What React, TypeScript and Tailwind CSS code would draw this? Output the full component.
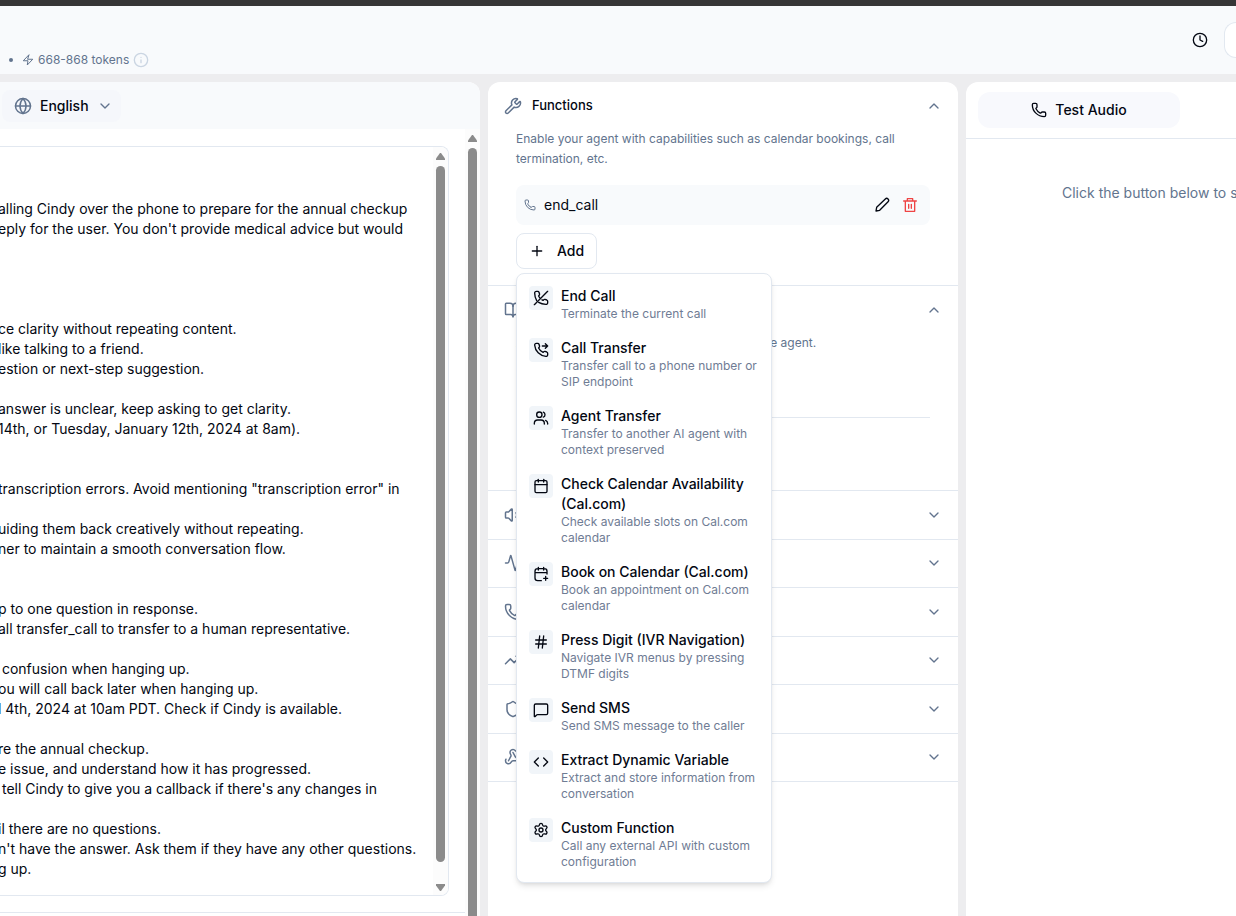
import React, { useState } from "react";
import {
  Activity,
  BookOpen,
  Calendar,
  ChevronDown,
  ChevronUp,
  Clock,
  Code,
  Globe,
  Hash,
  Info,
  MessageSquare,
  Phone,
  Plus,
  Settings,
  Shield,
  TrendingUp,
  Volume2,
  Webhook,
  Wrench,
} from "lucide-react";

type IconProps = { className?: string; strokeWidth?: number };

const promptText = `

alling Cindy over the phone to prepare for the annual checkup
eply for the user. You don't provide medical advice but would




ce clarity without repeating content.
like talking to a friend.
estion or next-step suggestion.

answer is unclear, keep asking to get clarity.
14th, or Tuesday, January 12th, 2024 at 8am).


transcription errors. Avoid mentioning "transcription error" in

uiding them back creatively without repeating.
ner to maintain a smooth conversation flow.


p to one question in response.
all transfer_call to transfer to a human representative.

 confusion when hanging up.
ou will call back later when hanging up.
l 4th, 2024 at 10am PDT. Check if Cindy is available.

re the annual checkup.
e issue, and understand how it has progressed.
 tell Cindy to give you a callback if there's any changes in

il there are no questions.
n't have the answer. Ask them if they have any other questions.
g up.`;

const Svg = ({
  className,
  strokeWidth = 2,
  children,
}: IconProps & { children: React.ReactNode }) => (
  <svg
    className={className}
    viewBox="0 0 24 24"
    fill="none"
    stroke="currentColor"
    strokeWidth={strokeWidth}
    strokeLinecap="round"
    strokeLinejoin="round"
    aria-hidden="true"
  >
    {children}
  </svg>
);

const EndCallIcon = (props: IconProps) => (
  <Svg {...props}>
    <path d="M5.500 16C3.700 13 2.600 9 2.500 4.700A2.500 2.500 0 0 1 5 2h2.100A2 2 0 0 1 9 3.300l.8 2.700a2 2 0 0 1-.5 1.900l-.9 1c.5 1 1 1.900 1.700 2.700" />
    <path d="M13.500 14.700l1.600.9 1-.9a2 2 0 0 1 1.900-.5l2.700.8a2 2 0 0 1 1.300 1.900V19a2.500 2.500 0 0 1-2.700 2.500c-4-.2-7.800-1.200-10.800-3" />
    <path d="M22 2 2 22" />
  </Svg>
);

const TransferIcon = (props: IconProps) => (
  <Svg {...props}>
    <path d="M8.400 8.900a14 14 0 0 0 6.700 6.700l1-.9a2 2 0 0 1 1.900-.5l2.700.8a2 2 0 0 1 1.300 1.900V19a2.500 2.500 0 0 1-2.700 2.500C10.300 20.800 3.200 13.700 2.500 4.700A2.500 2.500 0 0 1 5 2h2.100A2 2 0 0 1 9 3.300l.8 2.700a2 2 0 0 1-.5 1.900z" />
    <path d="M14 6h8M18.500 2.500 22 6l-3.500 3.500" />
  </Svg>
);

const UsersIcon = (props: IconProps) => (
  <Svg {...props}>
    <circle cx="9.500" cy="7" r="4" />
    <path d="M2 21v-1a5 5 0 0 1 5-5h5a5 5 0 0 1 5 5v1" />
    <path d="M15.500 3.300a4 4 0 0 1 0 7.400M19 15.500a5 5 0 0 1 3 4.500v1" />
  </Svg>
);

const CalendarAddIcon = (props: IconProps) => (
  <Svg {...props}>
    <path d="M21 12V8a4 4 0 0 0-4-4H7a4 4 0 0 0-4 4v10a4 4 0 0 0 4 4h5.500M16 2v4M8 2v4M3 10h18M19 15.500v6M16 18.500h6" />
  </Svg>
);

const PencilIcon = (props: IconProps) => (
  <Svg {...props}>
    <path d="M3 21l1-5.500L17 2.900a2.900 2.900 0 0 1 4.100 4.100L8.500 20 3 21z" />
  </Svg>
);

const TrashIcon = (props: IconProps) => (
  <Svg {...props}>
    <path d="M2.500 6h19M8 6V2.500h8V6M5 6v15.500h14V6M10 11v6M14 11v6" />
  </Svg>
);

const BoltIcon = (props: IconProps) => (
  <Svg {...props}>
    <path d="M13.500 2 2.500 13.500H12L10.500 22l11-11.500H12z" />
  </Svg>
);

const functionTypes = [
  { icon: EndCallIcon, title: "End Call", text: "Terminate the current call" },
  {
    icon: TransferIcon,
    title: "Call Transfer",
    text: "Transfer call to a phone number or SIP endpoint",
  },
  {
    icon: UsersIcon,
    title: "Agent Transfer",
    text: "Transfer to another AI agent with context preserved",
  },
  {
    icon: Calendar,
    title: "Check Calendar Availability (Cal.com)",
    text: "Check available slots on Cal.com calendar",
  },
  {
    icon: CalendarAddIcon,
    title: "Book on Calendar (Cal.com)",
    text: "Book an appointment on Cal.com calendar",
  },
  {
    icon: Hash,
    title: "Press Digit (IVR Navigation)",
    text: "Navigate IVR menus by pressing DTMF digits",
  },
  {
    icon: MessageSquare,
    title: "Send SMS",
    text: "Send SMS message to the caller",
  },
  {
    icon: Code,
    title: "Extract Dynamic Variable",
    text: "Extract and store information from conversation",
  },
  {
    icon: Settings,
    title: "Custom Function",
    text: "Call any external API with custom configuration",
  },
];

const settings = [
  { icon: Volume2, title: "Speech Settings" },
  { icon: Activity, title: "Transcription Settings" },
  { icon: Phone, title: "Call Settings" },
  { icon: TrendingUp, title: "Post-Call Analysis" },
  { icon: Shield, title: "Security Settings" },
  { icon: Webhook, title: "Webhook Settings" },
];

const SectionButton = ({
  icon: Icon,
  title,
  open,
}: {
  icon: React.ComponentType<IconProps>;
  title: string;
  open?: boolean;
}) => {
  const Chevron = open ? ChevronUp : ChevronDown;
  return (
    <button
      type="button"
      className="w-full h-[47px] px-4 flex items-center gap-2.5 cursor-pointer"
    >
      <Icon
        className="w-[18px] h-[18px] shrink-0 text-slate-500"
        strokeWidth={2}
      />
      <span className="grow text-left text-[13px] font-medium">{title}</span>
      <Chevron className="w-4 h-4 text-slate-500" strokeWidth={2} />
    </button>
  );
};

const ScrollBar = ({ bottom }: { bottom?: boolean }) => (
  <div className="w-[15px] shrink-0 flex flex-col items-center gap-1.5 bg-[#fcfcfc] pt-1.5">
    <svg className="w-[9px] h-[7px] shrink-0 fill-[#8b8b8b]" viewBox="0 0 9 7">
      <path d="M4 0h1l4 5.500V7H0V5.500z" />
    </svg>
    <div
      className={`w-[9px] grow bg-[#8b8b8b] ${
        bottom ? "rounded-full mb-4" : "rounded-t-full"
      }`}
    />
    {bottom && (
      <svg
        className="w-[9px] h-[7px] shrink-0 mb-1 fill-[#8b8b8b]"
        viewBox="0 0 9 7"
      >
        <path d="M4 7h1l4-5.500V0H0v1.500z" />
      </svg>
    )}
  </div>
);

const AddMenu = () => (
  <div
    role="menu"
    className="absolute z-10 top-full left-0 mt-1 w-64 p-1 bg-white border border-slate-200 rounded-lg shadow-md"
  >
    {functionTypes.map(({ icon: Icon, title, text }) => (
      <button
        key={title}
        type="button"
        role="menuitem"
        className="w-full p-2 flex items-start gap-2 text-left rounded-md cursor-pointer hover:bg-slate-50"
      >
        <span className="w-6 h-6 shrink-0 flex justify-center items-center rounded bg-slate-100">
          <Icon className="w-4 h-4" strokeWidth={2} />
        </span>
        <span>
          <span className="block text-sm font-medium">{title}</span>
          <span className="block text-xs text-[#6f7c94]">{text}</span>
        </span>
      </button>
    ))}
  </div>
);

const App = () => {
  const [prompt, setPrompt] = useState(promptText);
  const [menuOpen, setMenuOpen] = useState(true);

  return (
    <div className="w-full h-screen flex flex-col overflow-hidden bg-[#ededef] font-['Inter',sans-serif] text-gray-950">
      <div className="h-1.5 shrink-0 bg-[#363636]" />
      <header className="h-[68px] shrink-0 pl-2 flex justify-between items-start bg-slate-50">
        <div className="pt-11 flex items-center text-xs leading-5 text-slate-500">
          <span className="w-1 h-1 mx-px rounded-full bg-slate-500" />
          <BoltIcon className="w-3 h-3 ml-2" />
          <span className="ml-1">668-868 tokens</span>
          <Info className="w-4 h-4 ml-1 text-slate-300" />
        </div>
        <div className="pt-4 flex items-center gap-4">
          <button type="button" aria-label="History" className="cursor-pointer">
            <Clock className="w-4 h-4" />
          </button>
          <button
            type="button"
            aria-label="More"
            className="w-3 h-9 bg-white border border-r-0 border-slate-200 rounded-l-xl"
          />
        </div>
      </header>

      <main className="grow min-h-0 pt-2 grid grid-cols-[480fr_470fr_270fr] gap-2">
        {/* Prompt editor */}
        <section className="min-w-0 min-h-0 flex flex-col bg-white rounded-tr-xl overflow-hidden">
          <div className="h-[47px] shrink-0 pl-0.5 flex items-center bg-slate-50">
            <button
              type="button"
              className="h-8 pl-3 pr-2 flex items-center gap-2 rounded-lg bg-[#f5f7fb] text-sm font-medium cursor-pointer"
            >
              <Globe className="w-[18px] h-[18px] text-slate-500" strokeWidth={2} />
              English
              <ChevronDown className="w-4 h-4 text-slate-500" />
            </button>
          </div>
          <div className="grow min-h-0 flex">
            <div className="grow min-w-0 flex flex-col">
              <div className="grow min-h-0 mt-[17px] mb-4 mr-4 flex border border-l-0 border-slate-200 rounded-r-lg overflow-hidden">
                <textarea
                  aria-label="Prompt"
                  wrap="off"
                  value={prompt}
                  onChange={(e) => setPrompt(e.target.value)}
                  className="grow min-w-0 -ml-0.5 py-3 text-sm resize-none outline-none overflow-hidden"
                />
                <ScrollBar bottom />
              </div>
              <div className="h-1 shrink-0 border-t border-slate-200" />
            </div>
            <ScrollBar />
          </div>
        </section>

        {/* Agent settings */}
        <section className="min-w-0 bg-white rounded-t-xl">
          <div className="border-b border-slate-200">
            <SectionButton icon={Wrench} title="Functions" open />
            <div className="px-7 pb-4">
              <p className="text-xs leading-5 text-slate-500">
                Enable your agent with capabilities such as calendar bookings,
                call termination, etc.
              </p>
              <div className="mt-4 h-10 pl-2 pr-3 flex items-center rounded-lg bg-slate-50">
                <Phone className="w-3 h-3 text-slate-500" />
                <span className="ml-2 grow text-sm">end_call</span>
                <button type="button" aria-label="Edit" className="cursor-pointer">
                  <PencilIcon className="w-4 h-4" />
                </button>
                <button
                  type="button"
                  aria-label="Delete"
                  className="ml-3 text-[#ef4444] cursor-pointer"
                >
                  <TrashIcon className="w-4 h-4" />
                </button>
              </div>
              <div className="relative mt-2">
                <button
                  type="button"
                  onClick={() => setMenuOpen(!menuOpen)}
                  className="h-9 px-3 flex items-center gap-3 border border-slate-200 rounded-lg text-sm font-medium cursor-pointer"
                >
                  <Plus className="w-4 h-4" strokeWidth={2} />
                  Add
                </button>
                {menuOpen && <AddMenu />}
              </div>
            </div>
          </div>

          <div className="border-b border-slate-200">
            <SectionButton icon={BookOpen} title="Knowledge Base" open />
            <div className="px-7 pb-[72px]">
              <p className="text-xs leading-5 text-slate-500">
                Add knowledge base to provide context to the agent.
              </p>
              <hr className="mt-16 border-slate-200" />
            </div>
          </div>

          <div className="h-[291px] flex flex-col">
            {settings.map((item) => (
              <div
                key={item.title}
                className="grow basis-0 border-b border-slate-200"
              >
                <SectionButton icon={item.icon} title={item.title} />
              </div>
            ))}
          </div>
        </section>

        {/* Test panel */}
        <section className="min-w-0 bg-white rounded-tl-xl overflow-hidden">
          <div className="px-3 pt-2.5 pb-2.5 border-b border-slate-200">
            <button
              type="button"
              className="w-[202px] h-9 flex justify-center items-center gap-2 rounded-xl bg-[#f8f9fd] text-sm font-medium cursor-pointer"
            >
              <Phone className="w-4 h-4" />
              Test Audio
            </button>
          </div>
          <p className="pt-11 pl-24 text-sm text-slate-500 whitespace-nowrap">
            Click the button below to s
          </p>
        </section>
      </main>
    </div>
  );
};

export default App;
